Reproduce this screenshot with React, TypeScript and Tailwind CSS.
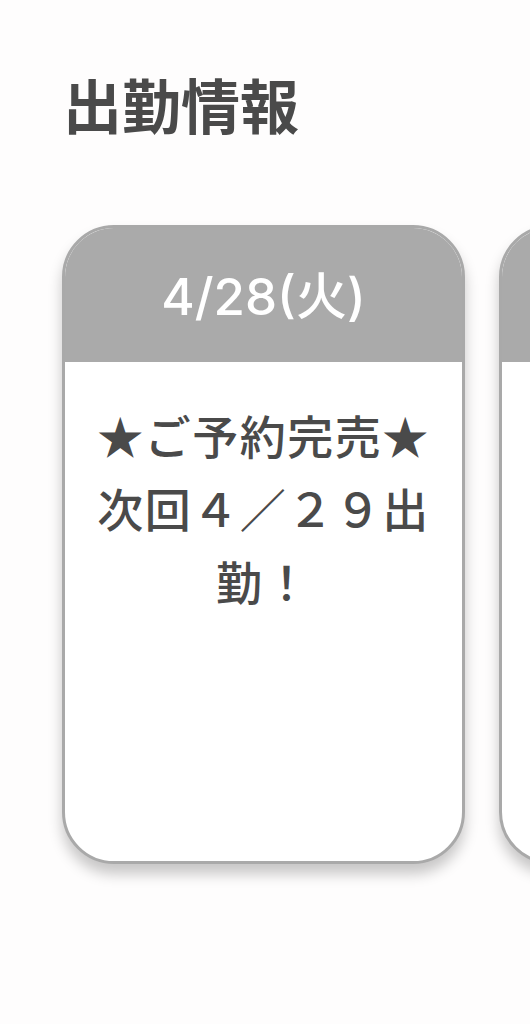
import React from 'react';

const FONT = { fontFamily: '"Noto Sans CJK JP", "Noto Sans", sans-serif' };
const DATE_FONT = { fontFamily: 'Inter, "Noto Sans CJK JP", sans-serif' };

const ShiftCard: React.FC<{ date?: string; lines?: string }> = ({ date, lines }) => (
    <div className="shrink-0 w-[403px] h-[639px] rounded-[52px] border-[3px] border-[#a9a9a9] bg-white overflow-hidden shadow-[0_10px_14px_rgba(0,0,0,0.22)] flex flex-col">
        <div className="h-[134px] bg-[#aaaaaa] flex items-center justify-center">
            <span className="text-white text-[51px] font-medium leading-none pt-[2px]" style={DATE_FONT}>{date}</span>
        </div>
        <div className="px-[28px] pt-[36px] text-center text-[#4a4a4a] text-[46px] font-medium leading-[73px] tracking-[1.5px]">
            {lines}
        </div>
    </div>
);

const App: React.FC = () => {
    return (
        <div className="w-[530px] h-[1024px] bg-[#fefdfd] overflow-hidden" style={FONT}>
            <h1 className="pl-[63px] pt-[74px] text-[59px] font-bold leading-none text-[#4a4a4a]">
                出勤情報
            </h1>
            <div className="flex gap-[34px] pl-[62px] pt-[92px]">
                <ShiftCard date="4/28(火)" lines="★ご予約完売★次回４／２９出勤！" />
                <ShiftCard />
            </div>
        </div>
    );
};

export default App;
